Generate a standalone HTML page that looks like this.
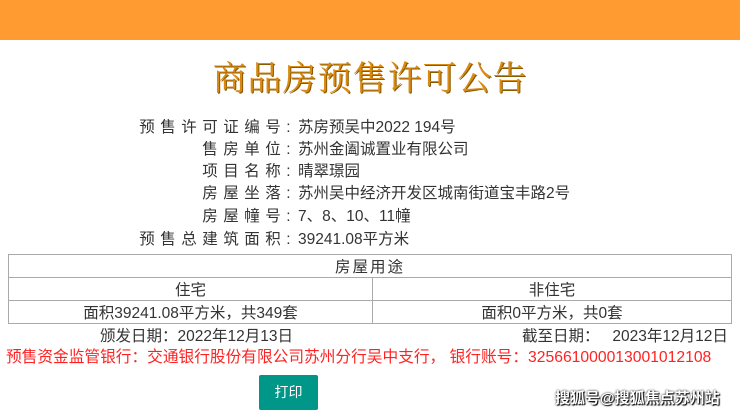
<!DOCTYPE html><html><head><meta charset="utf-8"><style>
body{margin:0;width:740px;height:414px;overflow:hidden;background:#fff;font-family:"Liberation Sans","Noto Sans CJK SC",sans-serif;color:#333;position:relative}
.bar{position:absolute;left:0;top:0;width:740px;height:40px;background:#ff9b30}
.title{position:absolute;top:54px;left:0;width:740px;text-align:center;font-family:"Noto Serif CJK SC",serif;font-size:34px;color:#d98a12;letter-spacing:1px;line-height:44px;text-shadow:1px 1px 0 #8a5a00}
.r{position:absolute;font-size:15.5px;line-height:20px;white-space:nowrap}
.l{right:444px;text-align:right;letter-spacing:5.5px}
.v{left:298px}
table{position:absolute;left:8px;top:254px;width:724px;border-collapse:collapse;font-size:15.5px}
td{border:1px solid #aaa;text-align:center;height:21px;padding:0}
.red{color:#f22;font-size:15.7px}
.btn{position:absolute;left:259px;top:375px;width:59px;height:35px;background:#009688;color:#fff;font-size:14px;text-align:center;line-height:35px;border-radius:2px}
.wm{position:absolute;left:555px;top:387px;font-size:15px;color:#fff;font-weight:bold;text-shadow:0 0 2px #000,1px 1px 1px #000}
</style></head><body>
<div class="bar"></div>
<div class="title">商品房预售许可公告</div>
<div class="r l" style="top:118px">预售许可证编号:</div><div class="r v" style="top:118px">苏房预吴中2022 194号</div>
<div class="r l" style="top:140px">售房单位:</div><div class="r v" style="top:140px">苏州金阖诚置业有限公司</div>
<div class="r l" style="top:162px">项目名称:</div><div class="r v" style="top:162px">晴翠璟园</div>
<div class="r l" style="top:184px">房屋坐落:</div><div class="r v" style="top:184px">苏州吴中经济开发区城南街道宝丰路2号</div>
<div class="r l" style="top:207px">房屋幢号:</div><div class="r v" style="top:207px">7、8、10、11幢</div>
<div class="r l" style="top:230px">预售总建筑面积:</div><div class="r v" style="top:230px">39241.08平方米</div>
<table><tr><td colspan="2" style="letter-spacing:2px">房屋用途</td></tr>
<tr><td style="width:363px">住宅</td><td>非住宅</td></tr>
<tr><td>面积39241.08平方米，共349套</td><td>面积0平方米，共0套</td></tr></table>
<div class="r" style="top:327px;left:100px">颁发日期：2022年12月13日</div>
<div class="r" style="top:327px;left:522px">截至日期：&nbsp;&nbsp;&nbsp;2023年12月12日</div>
<div class="r red" style="top:348px;left:6px">预售资金监管银行：交通银行股份有限公司苏州分行吴中支行，&nbsp;银行账号：325661000013001012108</div>
<div class="btn">打印</div>
<div class="wm">搜狐号@搜狐焦点苏州站</div>
</body></html>
